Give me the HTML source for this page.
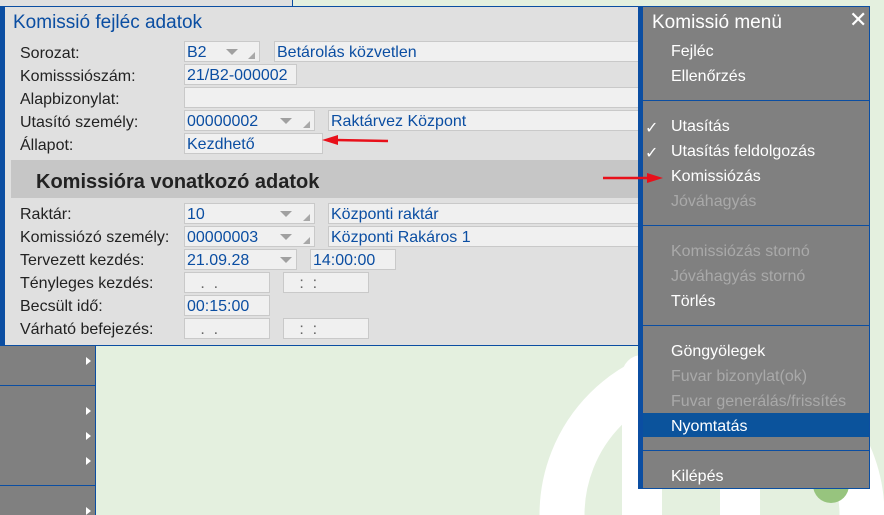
<!DOCTYPE html>
<html><head><meta charset="utf-8"><style>
*{margin:0;padding:0;box-sizing:border-box}
html,body{width:884px;height:515px;overflow:hidden}
body{position:relative;background:#e4f0df;font-family:"Liberation Sans",sans-serif}
.a{position:absolute}
.lbl{position:absolute;left:20px;font-size:16px;color:#222;line-height:20px;margin-top:2px}
.in{position:absolute;height:21px;background:#f0f0f0;border:1px solid #c9c9c9;color:#0b4ea2;font-size:16px;line-height:21px;padding-left:2px;white-space:nowrap;overflow:hidden}
.dd{position:absolute;width:0;height:0;border-left:6px solid transparent;border-right:6px solid transparent;border-top:6px solid #a0a0a0}
.cr{position:absolute;width:0;height:0;border-left:7px solid transparent;border-bottom:7px solid #a8a8a8}
.mi{position:absolute;left:671px;font-size:16px;color:#fff;line-height:20px;white-space:nowrap;margin-top:2px}
.dis{color:#a9a9a9}
.sep{position:absolute;left:643px;width:227px;height:1px;background:#0b4ea2}
.tri{position:absolute;left:86px;width:0;height:0;border-top:4px solid transparent;border-bottom:4px solid transparent;border-left:5px solid #fff}
.ck{position:absolute;left:645px;color:#fff;font-size:16px;margin-top:2px}
</style></head><body>
<svg class="a" style="left:0;top:0" width="884" height="515">
<circle cx="712" cy="515" r="150" fill="none" stroke="#fff" stroke-width="45"/>
<rect x="622" y="355" width="40" height="200" rx="20" fill="#fff"/>
<rect x="720" y="355" width="40" height="200" rx="20" fill="#fff"/>
<circle cx="831" cy="485" r="18" fill="#97c47e"/>
</svg>
<div class="a" style="left:0;top:0;width:293px;height:7px;background:#e0e0e0;border-right:1px solid #0b4ea2"></div>
<div class="a" style="left:0;top:345px;width:96px;height:170px;background:#808080;border-right:1px solid #0b4ea2"></div>
<div class="a" style="left:0;top:385px;width:95px;height:1px;background:#0b4ea2"></div>
<div class="a" style="left:0;top:485px;width:95px;height:1px;background:#0b4ea2"></div>
<div class="tri" style="top:357px"></div><div class="tri" style="top:407px"></div><div class="tri" style="top:432px"></div><div class="tri" style="top:457px"></div><div class="tri" style="top:507px"></div>
<div class="a" style="left:0;top:6px;width:640px;height:340px;background:#e0e0e0;border-top:1px solid #0b4ea2;border-bottom:1px solid #0b4ea2;border-left:5px solid #0b4ea2"></div>
<div class="a" style="left:13px;top:12px;font-size:19px;color:#0b4ea2">Komissió fejléc adatok</div>
<div class="lbl" style="top:42px">Sorozat:</div>
<div class="lbl" style="top:65px">Komisssiószám:</div>
<div class="lbl" style="top:88px">Alapbizonylat:</div>
<div class="lbl" style="top:111px">Utasító személy:</div>
<div class="lbl" style="top:134px">Állapot:</div>
<div class="in" style="left:184px;top:41px;width:76px">B2</div><div class="dd" style="left:226px;top:49px"></div><div class="cr" style="left:248px;top:52px"></div>
<div class="in" style="left:274px;top:41px;width:366px">Betárolás közvetlen</div>
<div class="in" style="left:184px;top:64px;width:113px">21/B2-000002</div>
<div class="in" style="left:184px;top:87px;width:456px"></div>
<div class="in" style="left:184px;top:110px;width:131px">00000002</div><div class="dd" style="left:280px;top:118px"></div><div class="cr" style="left:303px;top:121px"></div>
<div class="in" style="left:328px;top:110px;width:312px">Raktárvez Központ</div>
<div class="in" style="left:184px;top:133px;width:139px">Kezdhető</div>
<div class="a" style="left:11px;top:160px;width:627px;height:38px;background:#c6c6c6"></div>
<div class="a" style="left:36px;top:171px;font-size:20px;font-weight:bold;color:#222">Komissióra vonatkozó adatok</div>
<div class="lbl" style="top:203px">Raktár:</div>
<div class="lbl" style="top:226px">Komissiózó személy:</div>
<div class="lbl" style="top:249px">Tervezett kezdés:</div>
<div class="lbl" style="top:272px">Tényleges kezdés:</div>
<div class="lbl" style="top:295px">Becsült idő:</div>
<div class="lbl" style="top:318px">Várható befejezés:</div>
<div class="in" style="left:184px;top:203px;width:131px">10</div><div class="dd" style="left:280px;top:211px"></div><div class="cr" style="left:303px;top:214px"></div>
<div class="in" style="left:328px;top:203px;width:312px">Központi raktár</div>
<div class="in" style="left:184px;top:226px;width:131px">00000003</div><div class="dd" style="left:280px;top:234px"></div><div class="cr" style="left:303px;top:237px"></div>
<div class="in" style="left:328px;top:226px;width:312px">Központi Rakáros 1</div>
<div class="in" style="left:184px;top:249px;width:113px">21.09.28</div><div class="dd" style="left:280px;top:257px"></div>
<div class="in" style="left:310px;top:249px;width:86px">14:00:00</div>
<div class="in" style="left:184px;top:272px;width:86px;color:#666">&nbsp;&nbsp;&nbsp;.&nbsp;&nbsp;.</div>
<div class="in" style="left:283px;top:272px;width:86px;color:#666">&nbsp;&nbsp;&nbsp;:&nbsp;&nbsp;:</div>
<div class="in" style="left:184px;top:295px;width:86px">00:15:00</div>
<div class="in" style="left:184px;top:318px;width:86px;color:#666">&nbsp;&nbsp;&nbsp;.&nbsp;&nbsp;.</div>
<div class="in" style="left:283px;top:318px;width:86px;color:#666">&nbsp;&nbsp;&nbsp;:&nbsp;&nbsp;:</div>
<div class="a" style="left:638px;top:6px;width:232px;height:483px;background:#808080;border:1px solid #0b4ea2;border-left:5px solid #0b4ea2"></div>
<div class="a" style="left:643px;top:413px;width:226px;height:24px;background:#0b539c"></div>
<div class="a" style="left:652px;top:12px;font-size:19px;color:#fff">Komissió menü</div>
<div class="a" style="left:849px;top:7px;font-size:22px;color:#fff">✕</div>
<div class="mi" style="top:40px">Fejléc</div>
<div class="mi" style="top:65px">Ellenőrzés</div>
<div class="sep" style="top:100px"></div>
<div class="ck" style="top:116px">✓</div><div class="mi" style="top:115px">Utasítás</div>
<div class="ck" style="top:141px">✓</div><div class="mi" style="top:140px">Utasítás feldolgozás</div>
<div class="mi" style="top:165px">Komissiózás</div>
<div class="mi dis" style="top:190px">Jóváhagyás</div>
<div class="sep" style="top:225px"></div>
<div class="mi dis" style="top:240px">Komissiózás stornó</div>
<div class="mi dis" style="top:265px">Jóváhagyás stornó</div>
<div class="mi" style="top:290px">Törlés</div>
<div class="sep" style="top:325px"></div>
<div class="mi" style="top:340px">Göngyölegek</div>
<div class="mi dis" style="top:365px">Fuvar bizonylat(ok)</div>
<div class="mi dis" style="top:390px">Fuvar generálás/frissítés</div>
<div class="mi" style="top:415px">Nyomtatás</div>
<div class="sep" style="top:450px"></div>
<div class="mi" style="top:465px">Kilépés</div>
<svg class="a" style="left:0;top:0" width="884" height="515">
<line x1="388" y1="141" x2="335" y2="140" stroke="#e8101a" stroke-width="2.5"/>
<polygon points="322,140 338,135 338,145" fill="#e8101a"/>
<line x1="603" y1="178" x2="650" y2="178" stroke="#e8101a" stroke-width="2.5"/>
<polygon points="663,178 647,173 647,183" fill="#e8101a"/>
</svg>
</body></html>
